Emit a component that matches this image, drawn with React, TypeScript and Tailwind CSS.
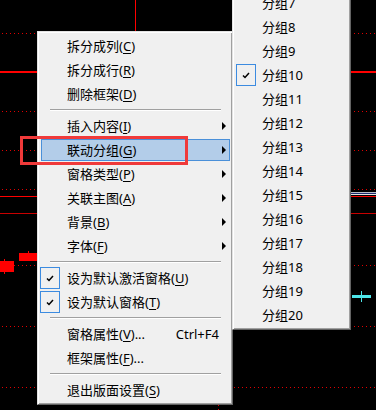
import React from 'react';

type Item =
  | 'sep'
  | { t: string; k: string; sub?: boolean; active?: boolean; checked?: boolean; suffix?: string; shortcut?: string };

const mainItems: Item[] = [
  { t: '拆分成列', k: 'C' },
  { t: '拆分成行', k: 'R' },
  { t: '删除框架', k: 'D' },
  'sep',
  { t: '插入内容', k: 'I', sub: true },
  { t: '联动分组', k: 'G', sub: true, active: true },
  { t: '窗格类型', k: 'P', sub: true },
  { t: '关联主图', k: 'A', sub: true },
  { t: '背景', k: 'B', sub: true },
  { t: '字体', k: 'F', sub: true },
  'sep',
  { t: '设为默认激活窗格', k: 'U', checked: true },
  { t: '设为默认窗格', k: 'T', checked: true },
  'sep',
  { t: '窗格属性', k: 'V', suffix: '...', shortcut: 'Ctrl+F4' },
  { t: '框架属性', k: 'F', suffix: '...' },
  'sep',
  { t: '退出版面设置', k: 'S' },
];

// only the part of the list that is on screen (scrolled submenu)
const groups = Array.from({ length: 14 }, (_, i) => i + 7);

const Check = () => (
  <div className="w-[20px] h-[22px] border border-[#3c8be0] flex items-center justify-center">
    <svg width="8" height="7" viewBox="0 0 8 7">
      <polyline points="1,3.5 3,5.5 7,1" fill="none" stroke="#000" strokeWidth="1.5" />
    </svg>
  </div>
);

const Arrow = () => (
  <svg width="4" height="8" viewBox="0 0 4 8">
    <polygon points="0,0 4,4 0,8" fill="#000" />
  </svg>
);

const Chart = () => (
  <svg width="376" height="410" className="absolute inset-0">
    {[33, 111, 150, 189, 265, 326, 387].map((y) => (
      <line key={y} x1="2" y1={y + 0.5} x2="376" y2={y + 0.5} stroke="#e00000" strokeDasharray="1 3" />
    ))}
    <rect x="0" y="71" width="376" height="2" fill="#ff0000" />
    <rect x="0" y="196" width="376" height="1" fill="#ff0000" />
    <rect x="340" y="192" width="36" height="1" fill="#b8bcc8" />
    <rect x="340" y="193" width="36" height="1" fill="#1c2c6c" />
    <rect x="340" y="194" width="36" height="1" fill="#e4e4e4" />
    <rect x="0" y="213" width="376" height="1" fill="#c80000" />
    <rect x="135" y="0" width="1" height="31" fill="#ff0000" />
    <rect x="28" y="251" width="1" height="3" fill="#ff0000" />
    <rect x="19" y="253" width="20" height="8" fill="#ff0000" />
    <rect x="4" y="259" width="1" height="15" fill="#ff0000" />
    <rect x="0" y="261" width="14" height="11" fill="#ff0000" />
    <rect x="352" y="295" width="19" height="3" fill="#4ee6ea" />
    <rect x="361" y="291" width="1" height="11" fill="#4ee6ea" />
    <line x1="218.5" y1="405" x2="218.5" y2="410" stroke="#e00000" strokeDasharray="1 3" />
  </svg>
);

const App = () => {
  return (
    <div className="relative w-[376px] h-[410px] overflow-hidden bg-black font-['Noto_Sans','Noto_Sans_CJK_SC',sans-serif] text-[13px] leading-none text-black">
      <Chart />

      {/* main context menu */}
      <div className="absolute left-[37px] top-[31px] w-[196px] bg-[#f0f0f0] border border-t-[#e3e3e3] border-l-[#e3e3e3] border-r-[#646464] border-b-[#646464] shadow-[inset_1px_1px_0_#ffffff,inset_-1px_-1px_0_#a0a0a0] p-[2px]">
        {mainItems.map((it, i) =>
          it === 'sep' ? (
            <div key={i} className="h-[8px] pt-[3px] pl-[10px] pr-[9px]">
              <div className="border-t border-[#a0a0a0] border-b border-b-white" />
            </div>
          ) : (
            <div key={i} className="relative h-[24px] py-px flex items-center">
              {it.active && (
                <div className="absolute left-px right-0 top-px bottom-px bg-[#b3cde9] border border-[#4a90d9]" />
              )}
              <div className="relative w-[27px] h-[22px] shrink-0">{it.checked && <Check />}</div>
              <span className="relative whitespace-nowrap">
                {it.t}(<span className="underline underline-offset-2">{it.k}</span>){it.suffix}
              </span>
              {it.shortcut && <span className="relative ml-auto whitespace-nowrap">{it.shortcut}</span>}
              <div className={`relative w-[11px] flex justify-end pr-[4px] shrink-0 ${it.shortcut ? '' : 'ml-auto'}`}>
                {it.sub && <Arrow />}
              </div>
            </div>
          )
        )}
      </div>

      {/* sub menu, scrolled so that its top runs off the screen */}
      <div className="absolute left-[232px] top-[-12px] w-[119px] bg-[#f0f0f0] border border-t-[#e3e3e3] border-l-[#e3e3e3] border-r-[#646464] border-b-[#646464] shadow-[inset_1px_1px_0_#ffffff,inset_-1px_-1px_0_#a0a0a0] p-[2px]">
        {groups.map((g) => (
          <div key={g} className="h-[24px] flex items-center">
            <div className="w-[27px] h-[22px] shrink-0 pl-px">{g === 10 && <Check />}</div>
            <span className="whitespace-nowrap">分组{g}</span>
          </div>
        ))}
      </div>

      {/* annotation */}
      <div className="absolute left-[20px] top-[136px] w-[168px] h-[29px] border-[3px] border-[#f03a3a]" />
    </div>
  );
};

export default App;
